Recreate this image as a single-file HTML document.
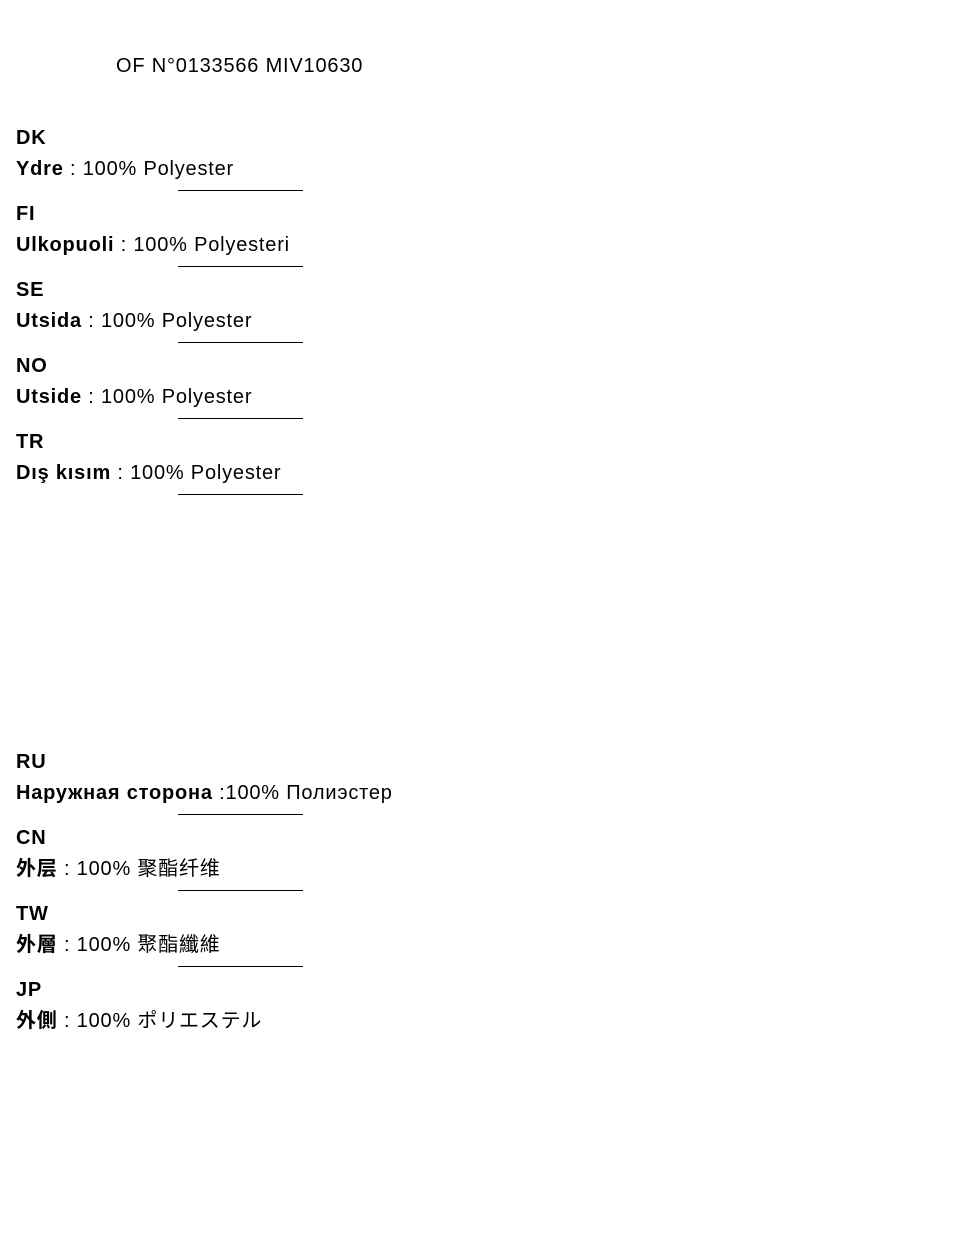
<!DOCTYPE html>
<html><head><meta charset="utf-8"><style>
body{margin:0;width:960px;height:1248px;background:#fff;position:relative;font-family:"Liberation Sans","Noto Sans CJK SC",sans-serif;font-size:20px;color:#000}
div{position:absolute;white-space:nowrap;line-height:20px;letter-spacing:0.8px}
b{font-weight:bold}
.l{height:1px;background:#000;left:178px;width:125px}
</style></head><body>
<div style="left:116px;top:56px">OF N°0133566 MIV10630</div>
<div style="left:16px;top:128px"><b>DK</b></div>
<div style="left:16px;top:159px"><b>Ydre</b> : 100% Polyester</div>
<div class="l" style="top:190px"></div>
<div style="left:16px;top:204px"><b>FI</b></div>
<div style="left:16px;top:235px"><b>Ulkopuoli</b> : 100% Polyesteri</div>
<div class="l" style="top:266px"></div>
<div style="left:16px;top:280px"><b>SE</b></div>
<div style="left:16px;top:311px"><b>Utsida</b> : 100% Polyester</div>
<div class="l" style="top:342px"></div>
<div style="left:16px;top:356px"><b>NO</b></div>
<div style="left:16px;top:387px"><b>Utside</b> : 100% Polyester</div>
<div class="l" style="top:418px"></div>
<div style="left:16px;top:432px"><b>TR</b></div>
<div style="left:16px;top:463px"><b>Dış kısım</b> : 100% Polyester</div>
<div class="l" style="top:494px"></div>
<div style="left:16px;top:752px"><b>RU</b></div>
<div style="left:16px;top:783px"><b>Наружная сторона</b> :100% Полиэстер</div>
<div class="l" style="top:814px"></div>
<div style="left:16px;top:828px"><b>CN</b></div>
<div style="left:16px;top:859px"><b>外层</b> : 100% 聚酯纤维</div>
<div class="l" style="top:890px"></div>
<div style="left:16px;top:904px"><b>TW</b></div>
<div style="left:16px;top:935px;font-family:'Liberation Sans','Noto Sans CJK TC',sans-serif"><b>外層</b> : 100% 聚酯纖維</div>
<div class="l" style="top:966px"></div>
<div style="left:16px;top:980px"><b>JP</b></div>
<div style="left:16px;top:1011px;font-family:'Liberation Sans','Noto Sans CJK JP',sans-serif"><b>外側</b> : 100% ポリエステル</div>
</body></html>
